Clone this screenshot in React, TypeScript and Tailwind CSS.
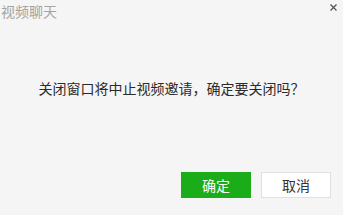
export default function App() {
  return (
    <div
      className="w-[343px] h-[215px] bg-[#f5f5f5] flex flex-col relative"
      style={{ fontFamily: '"Microsoft YaHei", "Noto Sans CJK SC", sans-serif' }}
    >
      <div className="flex items-start justify-between h-[24px]">
        <div className="text-[14px] leading-[20px] text-[#a3a3a3] pl-[1px] pt-[1px]">视频聊天</div>
        <div className="pr-[6px] pt-[4px]">
          <svg width="7" height="7" viewBox="0 0 7 7" className="block">
            <path d="M0.5 0.5 L6.5 6.5 M6.5 0.5 L0.5 6.5" stroke="#555" strokeWidth="1.3" />
          </svg>
        </div>
      </div>
      <div className="flex justify-center mt-[54px] text-[14px] leading-[20px] text-[#2b2b2b]">
        关闭窗口将中止视频邀请，确定要关闭吗？
      </div>
      <div className="flex justify-end gap-[10px] pr-[12px] mt-auto mb-[17px]">
        <button className="w-[70px] h-[26px] bg-[#1aad19] text-white text-[14px] leading-[26px]">确定</button>
        <button className="w-[70px] h-[26px] bg-white border border-[#e0e0e0] text-[#333] text-[14px] leading-[24px]">取消</button>
      </div>
    </div>
  );
}
